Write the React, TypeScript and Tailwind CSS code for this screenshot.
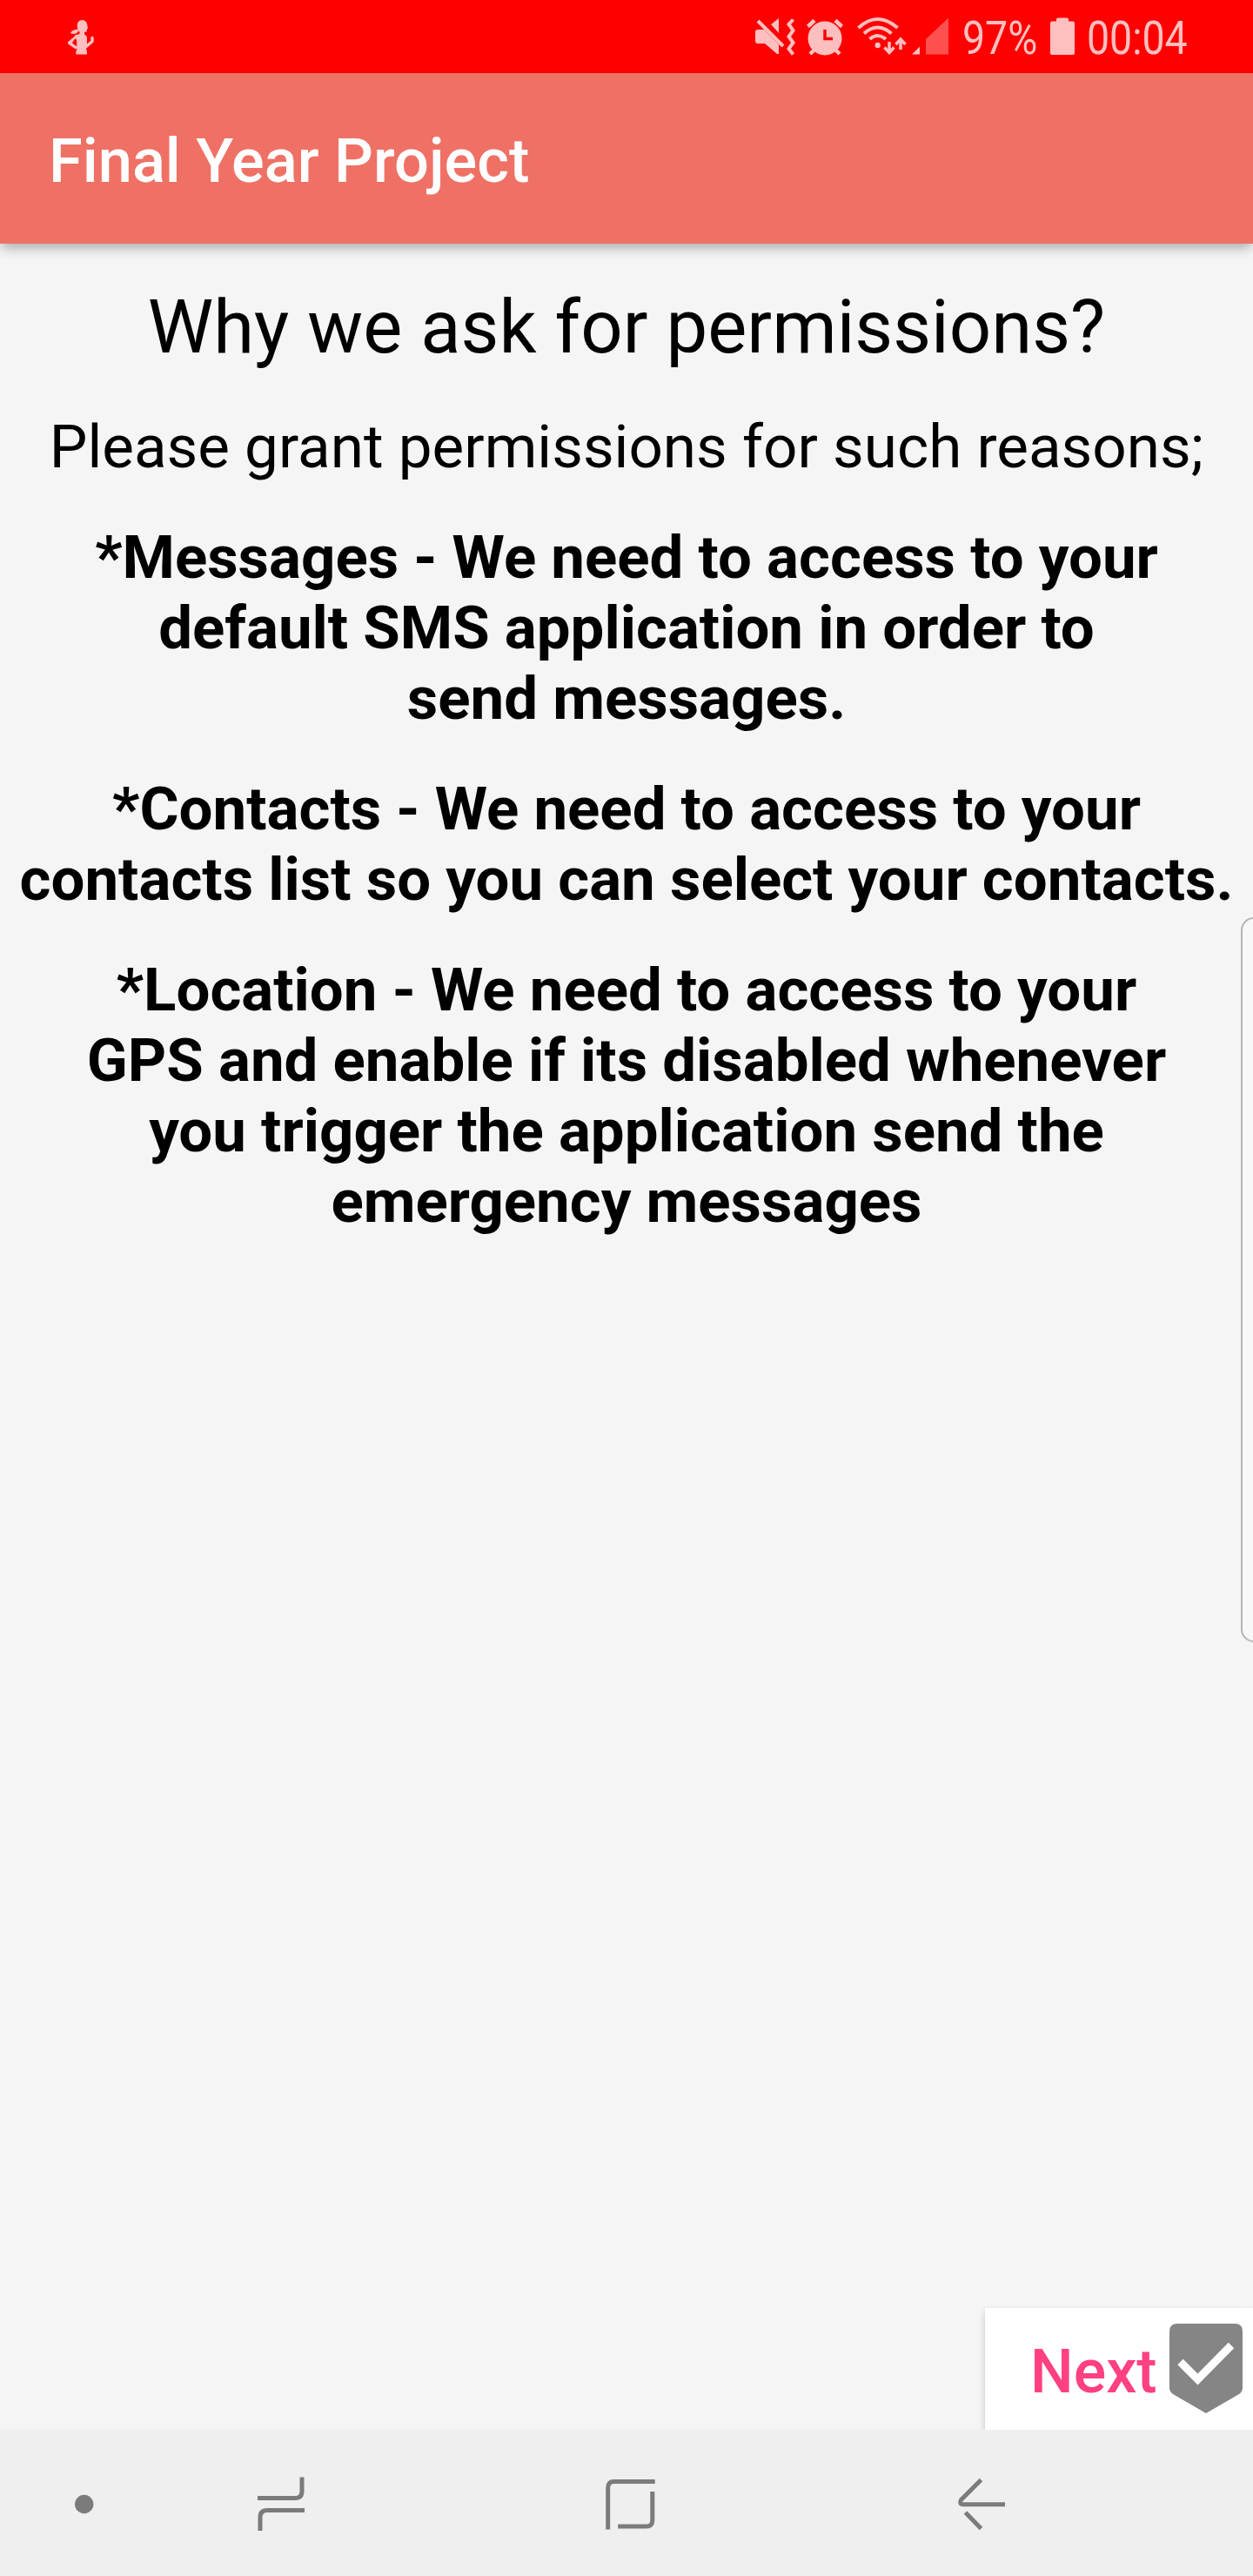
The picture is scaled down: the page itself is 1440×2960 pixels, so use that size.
function StatusIcons() {
  return (
    <svg width="232" height="84" viewBox="860 0 232 84" fill="#ffbfbf" className="shrink-0">
      <path d="M867 37q0-3 3-3h7l17 17v11h-2l-14-12h-8q-3 0-3-3zM885 28l9-7v17z" />
      <path d="M870 24l29 29" stroke="#ffbfbf" strokeWidth="4" />
      <path d="M910.500 22.500l-5 5.500 5 7-5 7 5 7-5 7 5 6.500" fill="none" stroke="#ffbfbf" strokeWidth="4" />
      <circle cx="947" cy="44" r="19.500" />
      <path d="M927.500 30.500l7.500-7M959 23.500l7.500 7M935 57l-5 5M959 57l5 5" stroke="#ffbfbf" strokeWidth="4.500" />
      <path d="M947 34v10.500h9" fill="none" stroke="#f00" strokeWidth="3.500" />
      <g fill="none" stroke="#ffbfbf" strokeWidth="4">
        <path d="M985.500 32q22-20 45 0M992 38.500q15.500-14 31.500 0M998.500 45q9-8 18.500 0" />
        <path d="M1021 48v12M1015.500 54.500l5.500 6 5.500-6M1034 57V45M1028.500 51l5.500-6 5.500 6" strokeWidth="3.500" />
      </g>
      <circle cx="1007.700" cy="52" r="3.200" />
      <path d="M1056 53.500V62.500H1047z" />
      <path d="M1063 45l26-24.500v42h-26z" fill="#ff5050" />
    </svg>
  );
}

function RunnerIcon() {
  return (
    <svg width="100" height="84" viewBox="50 0 100 84" fill="#ffbfbf" className="ml-[50px] shrink-0">
      <path d="M94.300 23c4 0 6 3 6 6.500l.7 3-1 1-.5 3-3 .5-5.500-.5c-1.500-2-2.300-4.500-2.300-7 0-3.500 2-6.500 5.600-6.500z" />
      <path d="M90 34l-3-.3q-4 .8-6.300 4.300 5.500 2.500 9-1.200z" />
      <path d="M91.500 35h5.500v4.500q3 1 3 4.500v6.500l-1 5 1 4v3H87.300v-3l1.700-4.500-2.200-6L86 40.500l5.500-1.500z" />
      <path d="M88.500 42l-8.800 7.200 7.500 5.300" fill="none" stroke="#ffbfbf" strokeWidth="3.600" strokeLinejoin="round" strokeLinecap="round" />
      <path d="M99 53.500l7-6v-4" fill="none" stroke="#ffbfbf" strokeWidth="3.400" strokeLinejoin="round" strokeLinecap="round" />
      <path d="M84.500 46.500v4.500l3.700 2v-6l-1.200-3z" fill="#f00" />
    </svg>
  );
}

function StatusBar() {
  return (
    <header className="flex h-[84px] items-start bg-[#ff0000] text-[#ffbfbf]">
      <RunnerIcon />
      <div className="mr-[73px] ml-auto flex">
        <StatusIcons />
        <span className="mt-[12px] ml-[13px] w-[86px] origin-left scale-x-[0.86] text-[54px] leading-[63px]">97%</span>
        <svg width="28" height="84" viewBox="1206 0 28 84" fill="#ffbfbf" className="ml-[15px] shrink-0">
          <path d="M1213 24.500V22.500q0-2 2-2h10q2 0 2 2v2h5q2 0 2 2V61q0 2-2 2h-24q-2 0-2-2V26.500q0-2 2-2z" />
        </svg>
        <span className="mt-[12px] ml-[14px] w-[118px] origin-left scale-x-[0.86] text-[54px] leading-[63px]">00:04</span>
      </div>
    </header>
  );
}

function NavBar() {
  return (
    <nav className="z-10 flex h-[168px] items-center bg-[#efefef]">
      <svg width="1440" height="168" viewBox="0 2792 1440 168" fill="none" stroke="#7b7b7b" strokeWidth="5">
        <circle cx="96.700" cy="2877.500" r="10.700" fill="#7b7b7b" stroke="none" />
        <path d="M296 2870.500h43q8 0 8-8v-16M350 2884.500h-43q-8 0-8 8v15.500" />
        <path d="M698.700 2906.500v-48q0-7 7-7h47M749.800 2863v33q0 7-7 7h-32.600" />
        <path d="M1127.500 2849.500l-23 23q-2.500 5 2.500 5.200h48M1109.500 2887l18 18.500" />
      </svg>
    </nav>
  );
}

const reasons = [
  ["*Messages - We need to access to your", "default SMS application in order to", "send messages."],
  ["*Contacts - We need to access to your", "contacts list so you can select your contacts."],
  [
    "*Location - We need to access to your",
    "GPS and enable if its disabled whenever",
    "you trigger the application send the",
    "emergency messages",
  ],
];

export default function App() {
  return (
    <div className="relative flex h-[2960px] w-[1440px] flex-col overflow-hidden bg-[#f5f5f5] font-['Roboto',sans-serif] text-black">
      <StatusBar />
      <div className="flex h-[196px] items-center bg-[#ef7165] pt-[6px] pl-[56px] shadow-[0_7px_13px_-2px_rgba(0,0,0,0.3)]">
        <h1 className="text-[70.4px] leading-[82px] font-medium text-white">Final Year Project</h1>
      </div>
      <main className="flex grow flex-col pt-[47px] text-center whitespace-nowrap">
        <h2 className="text-[85px] leading-[98px]">Why we ask for permissions?</h2>
        <p className="mt-[48px] text-[69.200px] leading-[81px]">Please grant permissions for such reasons;</p>
        <div className="mt-[46px] flex flex-col gap-[46px] text-[69px] leading-[81px] font-bold">
          {reasons.map((lines) => (
            <p key={lines[0]}>
              {lines.map((line) => (
                <span key={line} className="block">{line}</span>
              ))}
            </p>
          ))}
        </div>
        <button className="mt-auto flex h-[140px] w-[308px] items-center self-end bg-white pl-[52px] shadow-[0_4px_8px_rgba(0,0,0,0.2)]">
          <span className="pt-[6px] text-[70px] leading-[82px] font-medium text-[#ff4081]">Next</span>
          <svg width="84" height="104" viewBox="0 0 84 104" className="ml-[14px] shrink-0">
            <path d="M9 0h66q9 0 9 9v65q0 4-4 7L42 103 4 81q-4-3-4-7V9q0-9 9-9z" fill="#858585" />
            <path d="M12.500 44l20 20 38.500-39" fill="none" stroke="#fff" strokeWidth="9" />
          </svg>
        </button>
      </main>
      <NavBar />
      <div className="absolute top-[1054px] -right-[16px] h-[833px] w-[30px] rounded-[16px] border-2 border-[#b4b4b4] bg-[#f8f8f8]" />
    </div>
  );
}
